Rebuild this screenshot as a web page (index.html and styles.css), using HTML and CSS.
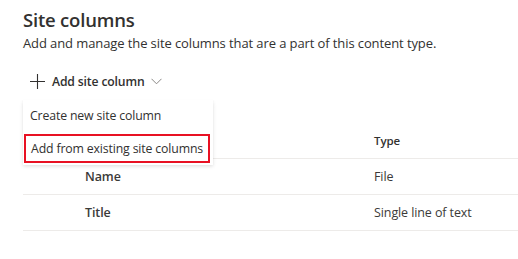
FILE: index.html
```html
<!DOCTYPE html>
<html lang="en">
<head>
<meta charset="utf-8">
<title>Site columns</title>
<link rel="stylesheet" href="styles.css">
</head>
<body>
<main class="page">
  <h1 class="title">Site columns</h1>
  <p class="subtitle">Add and manage the site columns that are a part of this content type.</p>
  <div class="commandbar">
    <button class="add-btn" type="button">
      <svg class="plus" width="15" height="15" viewBox="0 0 15 15"><path d="M7.5 0v15M0 7.5h15" stroke="#323130" stroke-width="1.1" fill="none"/></svg>
      <span class="add-label">Add site column</span>
      <svg class="chev" width="11" height="7" viewBox="0 0 11 7"><path d="M0.5 0.8l5 5 5-5" stroke="#8a8886" stroke-width="1" fill="none"/></svg>
    </button>
  </div>
  <div class="table">
    <div class="row header">
      <div class="cell name-col"></div>
      <div class="cell type-col head">Type</div>
    </div>
    <div class="row">
      <div class="cell name-col strong">Name</div>
      <div class="cell type-col">File</div>
    </div>
    <div class="row">
      <div class="cell name-col strong">Title</div>
      <div class="cell type-col">Single line of text</div>
    </div>
  </div>
  <div class="menu">
    <div class="menu-item">Create new site column</div>
    <div class="menu-item highlight">Add from existing site columns</div>
  </div>
</main>
</body>
</html>
```

FILE: styles.css
```css
html, body {
  margin: 0;
  padding: 0;
  background: #ffffff;
}
body {
  font-family: "Segoe UI", "Open Sans", "Noto Sans", sans-serif;
  color: #323130;
}
.page {
  position: relative;
  padding: 6px 0 0 23px;
}
.title {
  margin: 0;
  font-size: 18.5px;
  line-height: 28px;
  font-weight: 600;
  letter-spacing: -0.2px;
}
.subtitle {
  margin: 0;
  font-size: 13px;
  line-height: 18px;
  letter-spacing: -0.1px;
}
.commandbar {
  margin-top: 12px;
  height: 34px;
  display: flex;
  align-items: center;
}
.add-btn {
  display: flex;
  align-items: center;
  border: 0;
  background: none;
  padding: 0 0 0 7px;
  font: inherit;
  color: #323130;
}
.plus {
  display: block;
}
.add-label {
  margin-left: 7px;
  font-size: 12.2px;
  font-weight: 600;
  letter-spacing: -0.15px;
}
.chev {
  display: block;
  margin-left: 6px;
  margin-top: 1px;
}
.table {
  margin-top: 25px;
}
.row {
  display: flex;
  align-items: center;
  height: 35px;
  border-bottom: 1px solid #edebe9;
}
.cell {
  font-size: 12.5px;
  letter-spacing: -0.1px;
}
.name-col {
  width: 289px;
  padding-left: 62px;
}
.type-col {
  color: #3b3a39;
}
.head {
  font-size: 11.5px;
  font-weight: 600;
  color: #323130;
}
.strong {
  font-weight: 600;
  color: #3b3a39;
}
.menu {
  position: absolute;
  left: 23px;
  top: 100px;
  width: 190px;
  background: #ffffff;
  box-shadow: 0 1.6px 3.6px rgba(0,0,0,0.13), 0 0.3px 0.9px rgba(0,0,0,0.11);
  padding-bottom: 2px;
}
.menu-item {
  box-sizing: border-box;
  height: 31px;
  display: flex;
  align-items: center;
  padding-left: 7px;
  font-size: 12.3px;
  letter-spacing: -0.15px;
  color: #323130;
}
.highlight {
  margin: 3px 0 0 1px;
  width: 186px;
  height: 29px;
  padding-left: 5px;
  border: 2px solid #e81123;
}
```
